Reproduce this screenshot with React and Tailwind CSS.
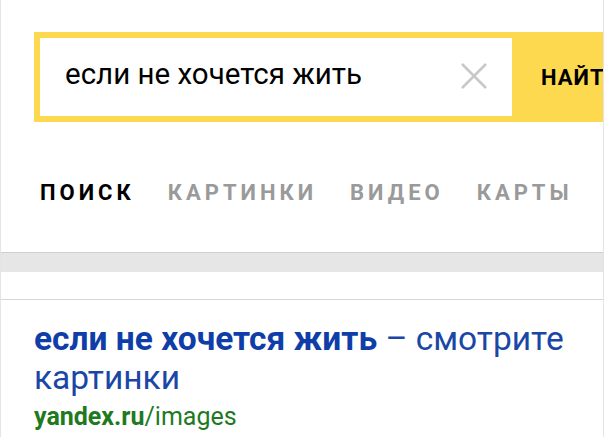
export default function App() {
  const tabs = ["ПОИСК", "КАРТИНКИ", "ВИДЕО", "КАРТЫ"];

  return (
    <div
      className="w-[604px] h-[437px] overflow-hidden bg-white border-x border-[#e4e4e4] flex flex-col"
      style={{ fontFamily: "Roboto, 'Noto Sans', sans-serif" }}
    >
      {/* Search bar */}
      <div className="pt-[32px] pl-[33px]">
        <div className="flex h-[90px] bg-[#fdd94f] pl-[6px] py-[6px] w-[600px]">
          <div className="w-[472px] bg-white flex items-center pl-[25px] pr-[24px]">
            <span className="flex-1 text-[29.5px] text-black leading-none pb-[4px]">если не хочется жить</span>
            <svg width="28" height="28" viewBox="0 0 28 28" className="mb-[2px]">
              <path d="M2 2 L26 26 M26 2 L2 26" stroke="#c8c8c8" strokeWidth="2.6" />
            </svg>
          </div>
          <div className="flex items-center pl-[29px] whitespace-nowrap">
            <span className="text-[22px] font-bold tracking-[1px] text-black">НАЙТИ</span>
          </div>
        </div>
      </div>

      {/* Tabs */}
      <div className="flex gap-[33px] pl-[39px] mt-[57px] h-[74px]">
        {tabs.map((t, i) => (
          <span
            key={t}
            className={`text-[22px] font-bold tracking-[4px] leading-[28px] ${i === 0 ? "text-black" : "text-[#9a9a9a]"}`}
          >
            {t}
          </span>
        ))}
      </div>

      {/* Separator */}
      <div className="border-t border-[#cfcfcf] bg-[#e6e6e6] h-[20px]" />
      <div className="h-[27px]" />
      <div className="border-t border-[#d6d6d6]" />

      {/* Result */}
      <div className="pl-[33px] pr-[20px] pt-[19px]">
        <div className="text-[33.5px] leading-[39px] text-[#1a47a6]">
          <span className="font-bold text-[#0f3ea8]">если не хочется жить</span> – смотрите картинки
        </div>
        <div className="text-[25px] leading-[40px] text-[#1f7a1f]">
          <span className="font-bold">yandex.ru</span>/images
        </div>
      </div>
    </div>
  );
}
